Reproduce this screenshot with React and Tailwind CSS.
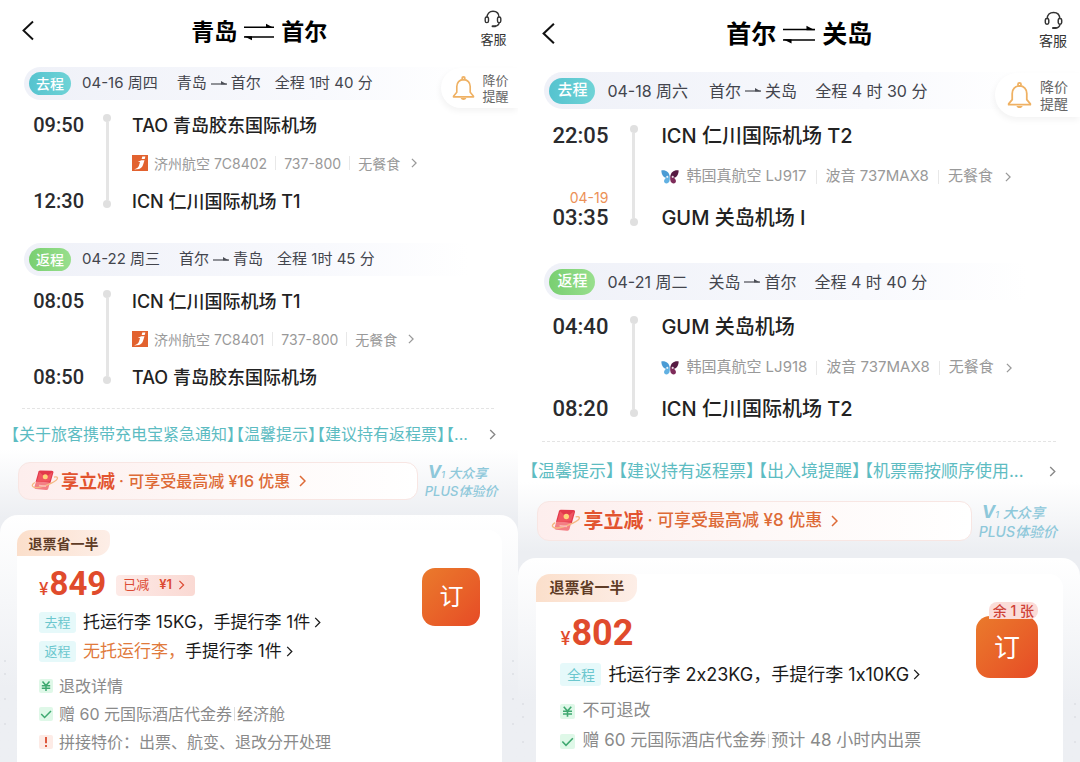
import { Fragment } from 'react';

// Two density presets: every class that differs between the narrow and the wide phone.
const SMALL = {
  header: 'h-[67px]', title: 'h-16 text-[23px] gap-[7px]', swap: 'w-[30px]', back: 'left-[22px] top-[20px] h-[21px] w-3',
  service: 'right-[12px] top-[10px] text-[13px]', headset: 'h-[18px] w-[20px]',
  band: 'ml-6 h-[33px] pl-[5px] text-[15px]', pill: 'h-[23px] w-[42px] text-[14px]', date: 'ml-[11px]', route: 'ml-[19px]', duration: 'ml-[14px]',
  alert: 'top-[1px] h-10 pl-[11px] pr-[10px] gap-[7px] text-[13px] leading-[16px]', bell: 'h-[27px] w-[23px]',
  leg: 'grid-cols-[84px_48px_1fr] grid-rows-[38px_38px_38px] pt-[6px]', rail: 'pt-2 pb-[12px] pr-[2px]', legGap: 'pb-[23px]', lastGap: 'pb-[12px]',
  time: 'text-[20px]', airport: 'text-[18px]', flight: 'text-[14px] gap-[6px]', nextDay: 'text-[13px]',
  dash: 'ml-[22px] mr-6', notice: 'h-[50px] pl-[11px] pr-[22px] text-[16px]', noticeGap: 'gap-px',
  promo: 'mt-[3px] pl-[18px] pr-[21px] gap-[7px]', promoBar: 'h-[38px] pl-3', promoIcon: 'w-[28px] h-[26px]', promoName: 'text-[18px]', promoText: 'text-[16px]',
  plus: 'text-[13px] leading-[16px]', card: 'mt-[15px] pt-[15px] pl-[17px] pr-4', tag: 'h-[26px] w-[93px] text-[14px]',
  body: 'pl-[22px] pr-[22px]', price: 'mt-[2px] h-[50px]', yen: 'text-[17px]', amount: 'text-[33px]',
  bagRow: 'h-[29px] text-[17px]', bagTag: 'h-[21px] w-[37px] text-[13px] mr-[7px]',
  infoRow: 'h-7 text-[16px]', infoIcon: 'h-[14px] w-[14px] mr-[6px]',
  book: 'h-[58px] w-[58px] rounded-[13px] mt-[12px] text-[24px]', stock: 'text-[13px]',
};

const LARGE = {
  header: 'h-[72px]', title: 'h-[70px] text-[25px] gap-[7px]', swap: 'w-[32px]', back: 'left-[24px] top-[22px] h-[23px] w-[13px]',
  service: 'right-[13px] top-[11px] text-[14px]', headset: 'h-[19px] w-[21px]',
  band: 'ml-[26px] h-[37px] pl-[5px] text-[16px]', pill: 'h-[26px] w-[46px] text-[15px]', date: 'ml-[12px]', route: 'ml-[21px]', duration: 'ml-[18px]',
  alert: 'top-[1px] h-[44px] pl-[12px] pr-[12px] gap-2 text-[14px] leading-[17px]', bell: 'h-[29px] w-[25px]',
  leg: 'grid-cols-[90px_53px_1fr] grid-rows-[41px_41px_41px] pt-[6px]', rail: 'pt-[10px] pb-[12px] pr-[2px]', legGap: 'pb-[25px]', lastGap: 'pb-[12px]',
  time: 'text-[22px]', airport: 'text-[20px]', flight: 'text-[15px] gap-[7px]', nextDay: 'text-[14px]',
  dash: 'ml-[24px] mr-6', notice: 'h-[59px] pl-[11px] pr-[24px] text-[17px]', noticeGap: 'gap-1',
  promo: 'pl-[19px] pr-[23px] gap-[7px]', promoBar: 'h-[40px] pl-[13px]', promoIcon: 'w-[30px] h-[28px]', promoName: 'text-[20px]', promoText: 'text-[17px]',
  plus: 'text-[14px] leading-[17px]', card: 'mt-[17px] pt-[16px] pl-[18px] pr-[17px]', tag: 'h-[28px] w-[101px] text-[15px]',
  body: 'pl-[24px] pr-[25px]', price: 'mt-[5px] h-[52px]', yen: 'text-[18px]', amount: 'text-[36px]',
  bagRow: 'h-[31px] text-[18px]', bagTag: 'h-[23px] w-[41px] text-[14px] mr-[7px]',
  infoRow: 'h-[30px] text-[17px]', infoIcon: 'h-[15px] w-[15px] mr-[7px]',
  book: 'h-[62px] w-[62px] rounded-[14px] mt-[14px] text-[26px]', stock: 'text-[14px]',
};

const TRIPS = [
  {
    size: SMALL,
    from: '青岛',
    to: '首尔',
    legs: [
      {
        kind: '去程', date: '04-16 周四', from: '青岛', to: '首尔', duration: '全程 1时 40 分',
        depart: '09:50', origin: 'TAO 青岛胶东国际机场', arrive: '12:30', dest: 'ICN 仁川国际机场 T1',
        logo: 'jeju', flight: ['济州航空 7C8402', '737-800', '无餐食'],
      },
      {
        kind: '返程', date: '04-22 周三', from: '首尔', to: '青岛', duration: '全程 1时 45 分',
        depart: '08:05', origin: 'ICN 仁川国际机场 T1', arrive: '08:50', dest: 'TAO 青岛胶东国际机场',
        logo: 'jeju', flight: ['济州航空 7C8401', '737-800', '无餐食'],
      },
    ],
    notices: ['【关于旅客携带充电宝紧急通知】', '【温馨提示】', '【建议持有返程票】', '【...'],
    promo: '可享受最高减 ¥16 优惠',
    price: 849,
    discount: '¥1',
    bags: [
      { tag: '去程', text: '托运行李 15KG，手提行李 1件' },
      { tag: '返程', warn: '无托运行李，', text: '手提行李 1件' },
    ],
    info: [
      { icon: 'yen', parts: ['退改详情'] },
      { icon: 'check', parts: ['赠 60 元国际酒店代金券', '经济舱'] },
      { icon: 'alert', parts: ['拼接特价：出票、航变、退改分开处理'] },
    ],
  },
  {
    size: LARGE,
    from: '首尔',
    to: '关岛',
    legs: [
      {
        kind: '去程', date: '04-18 周六', from: '首尔', to: '关岛', duration: '全程 4 时 30 分',
        depart: '22:05', origin: 'ICN 仁川国际机场 T2', nextDay: '04-19', arrive: '03:35', dest: 'GUM 关岛机场 I',
        logo: 'jin', flight: ['韩国真航空 LJ917', '波音 737MAX8', '无餐食'],
      },
      {
        kind: '返程', date: '04-21 周二', from: '关岛', to: '首尔', duration: '全程 4 时 40 分',
        depart: '04:40', origin: 'GUM 关岛机场', arrive: '08:20', dest: 'ICN 仁川国际机场 T2',
        logo: 'jin', flight: ['韩国真航空 LJ918', '波音 737MAX8', '无餐食'],
      },
    ],
    notices: ['【温馨提示】', '【建议持有返程票】', '【出入境提醒】', '【机票需按顺序使用...'],
    promo: '可享受最高减 ¥8 优惠',
    price: 802,
    bags: [{ tag: '全程', text: '托运行李 2x23KG，手提行李 1x10KG' }],
    info: [
      { icon: 'yen', parts: ['不可退改'] },
      { icon: 'check', parts: ['赠 60 元国际酒店代金券', '预计 48 小时内出票'] },
    ],
    stock: '余 1 张',
  },
];

function Chevron({ className, width = 1.5 }) {
  return (
    <svg viewBox="0 0 7 12" fill="none" stroke="currentColor" strokeWidth={width} className={className}>
      <path d="M1 1l5 5-5 5" />
    </svg>
  );
}

function SwapIcon({ className }) {
  return (
    <svg viewBox="0 0 30 18" className={className}>
      <path d="M0 4.3h30M0 14h30" stroke="#000" strokeWidth="1.4" />
      <path d="M30 5h-8V0.8zM0 13.3h8v4z" />
    </svg>
  );
}

function RouteArrow() {
  return (
    <svg viewBox="0 0 16 8" className="mx-1 h-2 w-4 shrink-0">
      <path d="M0 4h16" stroke="#4b4d55" strokeWidth="1.2" />
      <path d="M16 4.5h-6V1z" fill="#4b4d55" />
    </svg>
  );
}

function Headset({ className }) {
  return (
    <svg viewBox="0 0 20 18" fill="none" stroke="#333" strokeWidth="1.4" className={className}>
      <path d="M4 7.5C4 3.5 6.5 1.3 10 1.3s6 2.2 6 6.2" />
      <rect x="2.2" y="7" width="3.3" height="5.6" rx="1.6" />
      <rect x="14.5" y="7" width="3.3" height="5.6" rx="1.6" />
      <path d="M16.2 12.7c-.4 2.3-1.8 3.300-4.2 3.500" />
      <path d="M9.5 16.2h2.700" strokeWidth="1.9" strokeLinecap="round" />
    </svg>
  );
}

function Bell({ className }) {
  return (
    <svg viewBox="0 0 24 27" fill="none" stroke="#efb163" strokeWidth="1.7" strokeLinejoin="round" className={className}>
      <circle cx="12" cy="2.9" r="1.5" />
      <path d="M12 4.3c-4.300 0-7 3-7 7.200v6L1.6 21.6v.7h20.8v-.7L19 17.500v-6c0-4.200-2.700-7.200-7-7.200z" />
      <path d="M9 23.500c.5 1.300 1.500 2 3 2s2.500-.7 3-2z" fill="#efb163" stroke="none" />
    </svg>
  );
}

function AirlineLogo({ name }) {
  if (name === 'jeju') {
    return (
      <svg viewBox="0 0 16 16" className="h-4 w-4 shrink-0">
        <path d="M0 0h16v16H0z" fill="#e2622f" />
        <path d="M9.300 5.200h3.200c-.5 1.600-.9 3-1.500 4.800-.9 2.700-2.600 4-6.300 4.300L2 14.500c2.600-.8 4.200-1.700 5-4l1-3.600-2.200.2z" fill="#fff" />
        <path d="M10.300 1.600h3.100l-.7 2.300H9.700z" fill="#fff" />
      </svg>
    );
  }
  return (
    <svg viewBox="0 0 18 14" className="h-[14px] w-[18px] shrink-0">
      <path d="M.3.500C4.500-.3 8.400 2 8.700 6.800 6.500 8.800.8 8.600.3.500z" fill="#4a9bd4" />
      <path d="M8.700 6.600c.6 3.800-.6 6.900-3.200 6.900-3.200 0-3.400-4.300.2-6z" fill="#62b1e2" />
      <path d="M17.700.5C13.500-.3 9.600 2 9.300 6.800c2.200 2 7.900 1.800 8.400-6.300z" fill="#561a42" />
      <path d="M9.300 6.600c-.6 3.800.6 6.900 3.200 6.900 3.200 0 3.400-4.300-.2-6z" fill="#7e2b5a" />
      <circle cx="6.300" cy="6.800" r="1.100" fill="#e6f3fb" />
      <circle cx="11.700" cy="6.800" r="1.100" fill="#ead6e2" />
    </svg>
  );
}

function PromoIcon({ className }) {
  return (
    <svg viewBox="0 0 28 26" className={className}>
      <path d="M7.500 3.500Q8 2.500 9.300 2.500l11.500.3q2 .1 1.600 1.800l-3 10.400-14.800-1z" fill="#e2384a" />
      <path d="M5 13.500l13.800 1.200-1.500 5.800q-.5 1.800-2.300 1.600l-10.300-1q-1.900-.3-1.300-2z" fill="#f47f84" />
      <path d="M8.500 4l6 5.500 7-5.500-2.800 9.500-13 .5z" fill="#f05560" />
      <circle cx="14.300" cy="8.800" r="2.500" fill="#ffd27a" />
      <path d="M4 14.500C-.5 17 .5 20.500 8 19.300 16 18 27 12.500 26.500 9.800c-.2-1-1.800-1-3.500-.6" fill="none" stroke="#f5b983" strokeWidth="1.300" />
      <path d="M8 17.500l7 .7" stroke="#fbb9b8" strokeWidth="1.400" />
    </svg>
  );
}

const INFO_BG = { yen: 'bg-[#dff8e8]', check: 'bg-[#dff8e8]', alert: 'bg-[#fdebe6]' };

function InfoIcon({ name, className }) {
  return (
    <span className={`grid shrink-0 place-items-center rounded-[2px] ${INFO_BG[name]} ${className}`}>
      <svg viewBox="0 0 14 14" fill="none" strokeWidth="1.500" className="h-full w-full">
        {name === 'yen' && <path d="M3.500 2.500L7 6.500l3.500-4M2.800 6.800h8.400M2.800 9.300h8.400M7 6.500V12" stroke="#3fa870" />}
        {name === 'check' && <path d="M2.200 7l3.400 3.500L12 4" stroke="#3fa870" />}
        {name === 'alert' && <path d="M7 2v6.300M7 9.900v2" stroke="#dc5237" strokeWidth="1.900" />}
      </svg>
    </span>
  );
}

function Leg({ leg, s, last, withAlert }) {
  const pill = leg.kind === '去程' ? 'from-[#55c3cf] to-[#6fd3d6]' : 'from-[#79cf71] to-[#98df8d]';
  return (
    <section>
      <div className="relative">
        <div className={`flex items-center whitespace-nowrap rounded-l-full bg-gradient-to-r from-[#eff1f8] via-[#f8f9fd] via-60% to-white to-90% text-[#43454d] ${s.band}`}>
          <span className={`grid place-items-center rounded-full bg-gradient-to-r font-medium text-white ${pill} ${s.pill}`}>{leg.kind}</span>
          <span className={s.date}>{leg.date}</span>
          <span className={`flex items-center ${s.route}`}>{leg.from}<RouteArrow />{leg.to}</span>
          <span className={s.duration}>{leg.duration}</span>
        </div>
        {withAlert && (
          <button type="button" className={`absolute right-0 flex items-center rounded-l-full bg-white text-[#666] shadow-[-1px_3px_6px_rgba(0,0,0,0.05)] ${s.alert}`}>
            <Bell className={s.bell} />
            <span>降价<br />提醒</span>
          </button>
        )}
      </div>
      <div className={last ? s.lastGap : s.legGap}>
        <div className={`grid items-center whitespace-nowrap ${s.leg}`}>
          <time className={`text-right font-['Roboto',sans-serif] font-medium text-[#2a2b2e] ${s.time}`}>{leg.depart}</time>
          <div className={`row-span-3 flex h-full flex-col items-center ${s.rail}`}>
            <i className="h-2 w-2 rounded-full bg-[#e0e0e0]" />
            <i className="w-[3px] flex-1 bg-[#e5e5e5]" />
            <i className="h-2 w-2 rounded-full bg-[#e0e0e0]" />
          </div>
          <h3 className={`font-medium text-[#222] ${s.airport}`}>{leg.origin}</h3>
          <span />
          <button type="button" className={`flex items-center text-[#999] ${s.flight}`}>
            <AirlineLogo name={leg.logo} />
            {leg.flight.map((part, i) => (
              <Fragment key={part}>
                {i > 0 && <i className="mx-[2px] h-[14px] w-px bg-[#e8e8e8]" />}
                <span>{part}</span>
              </Fragment>
            ))}
            <Chevron className="ml-[5px] h-[10px] w-[6px]" />
          </button>
          <div className="relative text-right">
            {leg.nextDay && <span className={`absolute bottom-full right-0 -mb-[4px] leading-none text-[#ec9157] ${s.nextDay}`}>{leg.nextDay}</span>}
            <time className={`font-['Roboto',sans-serif] font-medium text-[#2a2b2e] ${s.time}`}>{leg.arrive}</time>
          </div>
          <h3 className={`font-medium text-[#222] ${s.airport}`}>{leg.dest}</h3>
        </div>
      </div>
    </section>
  );
}

function Offer({ trip, s }) {
  return (
    <div className={`relative flex flex-1 flex-col rounded-t-[18px] bg-gradient-to-b from-white to-[#edeff3] to-70% ${s.card}`}>
      <svg viewBox="0 0 4 74" className="absolute left-[3px] top-[144px] h-[74px] w-1" fill="#dcdfe5">
        <circle cx="2" cy="2" r="1" /><circle cx="2" cy="15" r="1" /><circle cx="2" cy="40" r="1" /><circle cx="2" cy="65" r="1" />
      </svg>
      <svg viewBox="0 0 4 74" className="absolute right-[3px] top-[144px] h-[74px] w-1" fill="#dcdfe5">
        <circle cx="2" cy="2" r="1" /><circle cx="2" cy="15" r="1" /><circle cx="2" cy="40" r="1" /><circle cx="2" cy="65" r="1" />
      </svg>
      <div className="flex-1 rounded-t-[14px] bg-white">
        <div className={`grid place-items-center rounded-br-[14px] rounded-tl-[14px] rounded-tr-[6px] bg-gradient-to-r from-[#fbdfcb] to-[#fdeee7] font-bold text-[#5f3c26] ${s.tag}`}>退票省一半</div>
        <div className={`flex items-start justify-between ${s.body}`}>
          <div className="whitespace-nowrap">
            <div className={`flex items-center ${s.price}`}>
              <div className="flex items-baseline gap-px font-['Roboto',sans-serif] font-bold leading-none text-[#e04b2c]">
                <span className={`font-['Inter',sans-serif] font-medium ${s.yen}`}>¥</span>
                <span className={s.amount}>{trip.price}</span>
              </div>
              {trip.discount && (
                <button type="button" className="ml-[10px] mt-1 flex h-[21px] items-center rounded-[4px] bg-gradient-to-r from-[#fdeae7] to-[#fad9d3] px-[7px] text-[13px] text-[#dc4b34]">
                  已减<b className="ml-[10px] font-semibold">{trip.discount}</b>
                  <Chevron className="ml-[6px] mr-[3px] h-[10px] w-[7px]" width={1.5} />
                </button>
              )}
            </div>
            {trip.bags.map((bag) => (
              <div key={bag.tag} className={`flex items-center text-[#1a1a1a] ${s.bagRow}`}>
                <span className={`grid place-items-center rounded-[3px] bg-[#e6f9fa] text-[#6cc7ce] ${s.bagTag}`}>{bag.tag}</span>
                {bag.warn && <span className="text-[#e07a3c]">{bag.warn}</span>}
                <span>{bag.text}</span>
                <Chevron className="ml-1 h-[11px] w-[7px]" width={1.4} />
              </div>
            ))}
            <ul className="mt-[6px] text-[#8a8a8a]">
              {trip.info.map((row) => (
                <li key={row.icon} className={`flex items-center ${s.infoRow}`}>
                  <InfoIcon name={row.icon} className={s.infoIcon} />
                  {row.parts.map((part, i) => (
                    <Fragment key={part}>
                      {i > 0 && <i className="mx-[2px] h-[14px] w-px bg-[#ddd]" />}
                      <span>{part}</span>
                    </Fragment>
                  ))}
                </li>
              ))}
            </ul>
          </div>
          <div className="relative">
            <button type="button" className={`grid place-items-center bg-gradient-to-br from-[#ea7a2c] to-[#e64a26] text-white ${s.book}`}>订</button>
            {trip.stock && (
              <span className={`absolute right-0 top-0 whitespace-nowrap rounded-t-[8px] rounded-br-[8px] bg-[#fbdcd8] px-1 font-medium leading-[17px] text-[#cf4238] ${s.stock}`}>{trip.stock}</span>
            )}
          </div>
        </div>
      </div>
    </div>
  );
}

function Trip({ trip }) {
  const s = trip.size;
  return (
    <main className="flex min-w-0 flex-col overflow-hidden bg-white">
      <header className={`relative flex justify-center ${s.header}`}>
        <button type="button" aria-label="返回" className={`absolute ${s.back}`}>
          <svg viewBox="0 0 12 21" fill="none" stroke="#111" strokeWidth="1.900" className="h-full w-full"><path d="M11 1.500l-9.500 9 9.500 9" /></svg>
        </button>
        <h1 className={`flex items-center font-bold text-black ${s.title}`}>
          {trip.from}<SwapIcon className={s.swap} />{trip.to}
        </h1>
        <button type="button" className={`absolute flex flex-col items-center gap-[3px] leading-[16px] text-[#333] ${s.service}`}>
          <Headset className={s.headset} />客服
        </button>
      </header>
      {trip.legs.map((leg, i) => (
        <Leg key={leg.kind} leg={leg} s={s} withAlert={i === 0} last={i === trip.legs.length - 1} />
      ))}
      <div className={`border-t border-dashed border-[#e4e4e4] ${s.dash}`} />
      <div className="flex flex-1 flex-col bg-[linear-gradient(180deg,#fff_40px,#eceef2_110px)]">
        <a href="#notice" className={`flex items-center justify-between whitespace-nowrap text-[#5dbcc2] ${s.notice}`}>
          <span className={`flex [font-feature-settings:'halt'] ${s.noticeGap}`}>
            {trip.notices.map((notice) => <span key={notice}>{notice}</span>)}
          </span>
          <Chevron className="h-[11px] w-[7px] text-[#888]" />
        </a>
        <div className={`flex items-center whitespace-nowrap ${s.promo}`}>
          <button type="button" className={`flex flex-1 items-center rounded-[12px] border border-[#f8e6e3] bg-gradient-to-r from-[#fdeeed] via-[#fef8f7] to-white text-[#dd6a36] ${s.promoBar}`}>
            <PromoIcon className={s.promoIcon} />
            <b className={`ml-[2px] text-[#e2542f] ${s.promoName}`}>享立减</b>
            <span className={`ml-1 font-medium ${s.promoText}`}>· {trip.promo}</span>
            <Chevron className="ml-[9px] h-[12px] w-[7px]" />
          </button>
          <div className={`font-medium italic text-[#8ec8da] ${s.plus}`}>
            <div className="pl-[3px]"><b className="text-[18px] leading-none">V</b><small className="text-[9px]">1</small> 大众享</div>
            <div>PLUS体验价</div>
          </div>
        </div>
        <Offer trip={trip} s={s} />
      </div>
    </main>
  );
}

export default function App() {
  return (
    <div className="grid min-h-screen grid-cols-[12fr_13fr] bg-white font-['Inter','Noto_Sans_CJK_SC',sans-serif]">
      {TRIPS.map((trip) => <Trip key={trip.to} trip={trip} />)}
    </div>
  );
}
